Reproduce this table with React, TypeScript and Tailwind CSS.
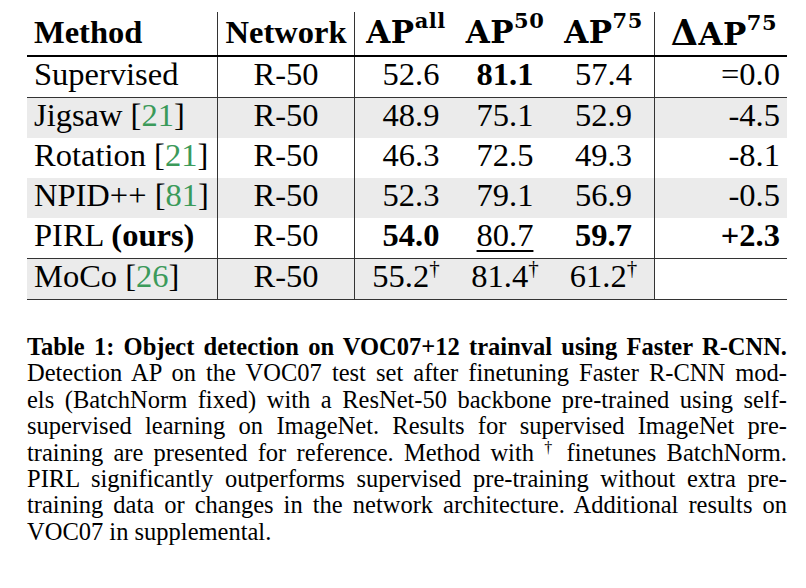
import type { ReactNode } from 'react'

const serif = "font-['Liberation_Serif','Times_New_Roman',serif]"
const grid = 'grid grid-cols-[191px_137px_102px_96px_102px_132px] grid-rows-1'

function Cite({ n }: { n: string }) {
  return (
    <>
      [<span className="text-[#3b9a5a]">{n}</span>]
    </>
  )
}

// bold math header like "AP^50"
function Hd({ delta = false, sup }: { delta?: boolean; sup: string }) {
  return (
    <span className="font-['DejaVu_Serif',serif] font-bold text-[31px] tracking-[0.5px]">
      {delta && <span className="text-[35px]">Δ</span>}
      AP<span className="relative top-[-15px] text-[21px] leading-none">{sup}</span>
    </span>
  )
}

function Dag() {
  return <span className="relative top-[-12px] text-[21px] leading-none">†</span>
}

interface RowProps {
  cells: ReactNode[]
  gray?: boolean
  lastWhite?: boolean
  border?: boolean
}

function Row({ cells, gray = false, lastWhite = false, border = false }: RowProps) {
  const bg = gray ? 'bg-[#ebebeb]' : 'bg-white'
  return (
    <div className={`${grid} ${border ? 'h-[41px] border-b border-[#333]' : 'h-[40px]'}`}>
      <div className={`${bg} flex items-center border-r border-[#333] pl-[7px] pb-[5px]`}>
        <span>{cells[0]}</span>
      </div>
      <div className={`${bg} flex items-center justify-center border-r border-[#333] pb-[5px]`}>
        <span>{cells[1]}</span>
      </div>
      <div className={`${bg} flex items-center justify-center pb-[5px] ${lastWhite ? '' : 'pl-[10px]'}`}>
        <span>{cells[2]}</span>
      </div>
      <div className={`${bg} flex items-center justify-center pb-[5px]`}>
        <span>{cells[3]}</span>
      </div>
      <div className={`${bg} flex items-center justify-center border-r border-[#333] pb-[5px]`}>
        <span>{cells[4]}</span>
      </div>
      <div className={`${lastWhite ? 'bg-white' : bg} flex items-center justify-end pr-[7px] pb-[5px]`}>
        <span>{cells[5]}</span>
      </div>
    </div>
  )
}

const lines = [
  'Detection AP on the VOC07 test set after finetuning Faster R-CNN mod-',
  'els (BatchNorm fixed) with a ResNet-50 backbone pre-trained using self-',
  'supervised learning on ImageNet.  Results for supervised ImageNet pre-',
]

export default function App() {
  return (
    <div className={`${serif} w-[806px] h-[588px] bg-white text-black`}>
      <div className="ml-[27px] w-[760px] pt-[12px] text-[32.5px] leading-none">
        <div className={`${grid} h-[45px] border-b-2 border-black font-bold`}>
          <div className="flex items-center border-r border-[#333] pl-[7px] pb-[2px]">
            <span>Method</span>
          </div>
          <div className="flex items-center justify-center border-r border-[#333] pb-[2px]">
            <span>Network</span>
          </div>
          <div className="flex items-center justify-center pb-[2px]">
            <Hd sup="all" />
          </div>
          <div className="flex items-center justify-center pb-[2px]">
            <Hd sup="50" />
          </div>
          <div className="flex items-center justify-center border-r border-[#333] pb-[2px]">
            <Hd sup="75" />
          </div>
          <div className="flex items-center justify-end pr-[10px] pb-[2px]">
            <Hd delta sup="75" />
          </div>
        </div>
        <Row border cells={['Supervised', 'R-50', '52.6', <b>81.1</b>, '57.4', '=0.0']} />
        <Row gray cells={[<>Jigsaw <Cite n="21" /></>, 'R-50', '48.9', '75.1', '52.9', '-4.5']} />
        <Row cells={[<>Rotation <Cite n="21" /></>, 'R-50', '46.3', '72.5', '49.3', '-8.1']} />
        <Row gray cells={[<>NPID++ <Cite n="81" /></>, 'R-50', '52.3', '79.1', '56.9', '-0.5']} />
        <Row
          border
          cells={[
            <>PIRL <b>(ours)</b></>,
            'R-50',
            <b>54.0</b>,
            <span className="underline decoration-[1.5px] underline-offset-[4px]">80.7</span>,
            <b>59.7</b>,
            <b>+2.3</b>,
          ]}
        />
        <Row
          gray
          lastWhite
          border
          cells={[
            <>MoCo <Cite n="26" /></>,
            'R-50',
            <>55.2<Dag /></>,
            <>81.4<Dag /></>,
            <>61.2<Dag /></>,
            '',
          ]}
        />
      </div>

      <div className="ml-[27px] w-[760px] mt-[34px] text-[24.5px] leading-[26.4px]">
        <div className="font-bold text-justify [text-align-last:justify]">
          Table 1: Object detection on VOC07+12 trainval using Faster R-CNN.
        </div>
        {lines.map((l) => (
          <div key={l} className="text-justify [text-align-last:justify] whitespace-nowrap">
            {l}
          </div>
        ))}
        <div className="text-justify [text-align-last:justify]">
          training are presented for reference. Method with{' '}
          <span className="relative top-[-8px] text-[16px] leading-none">†</span> finetunes BatchNorm.
        </div>
        <div className="text-justify [text-align-last:justify]">
          PIRL significantly outperforms supervised pre-training without extra pre-
        </div>
        <div className="text-justify [text-align-last:justify]">
          training data or changes in the network architecture. Additional results on
        </div>
        <div>VOC07 in supplemental.</div>
      </div>
    </div>
  )
}
